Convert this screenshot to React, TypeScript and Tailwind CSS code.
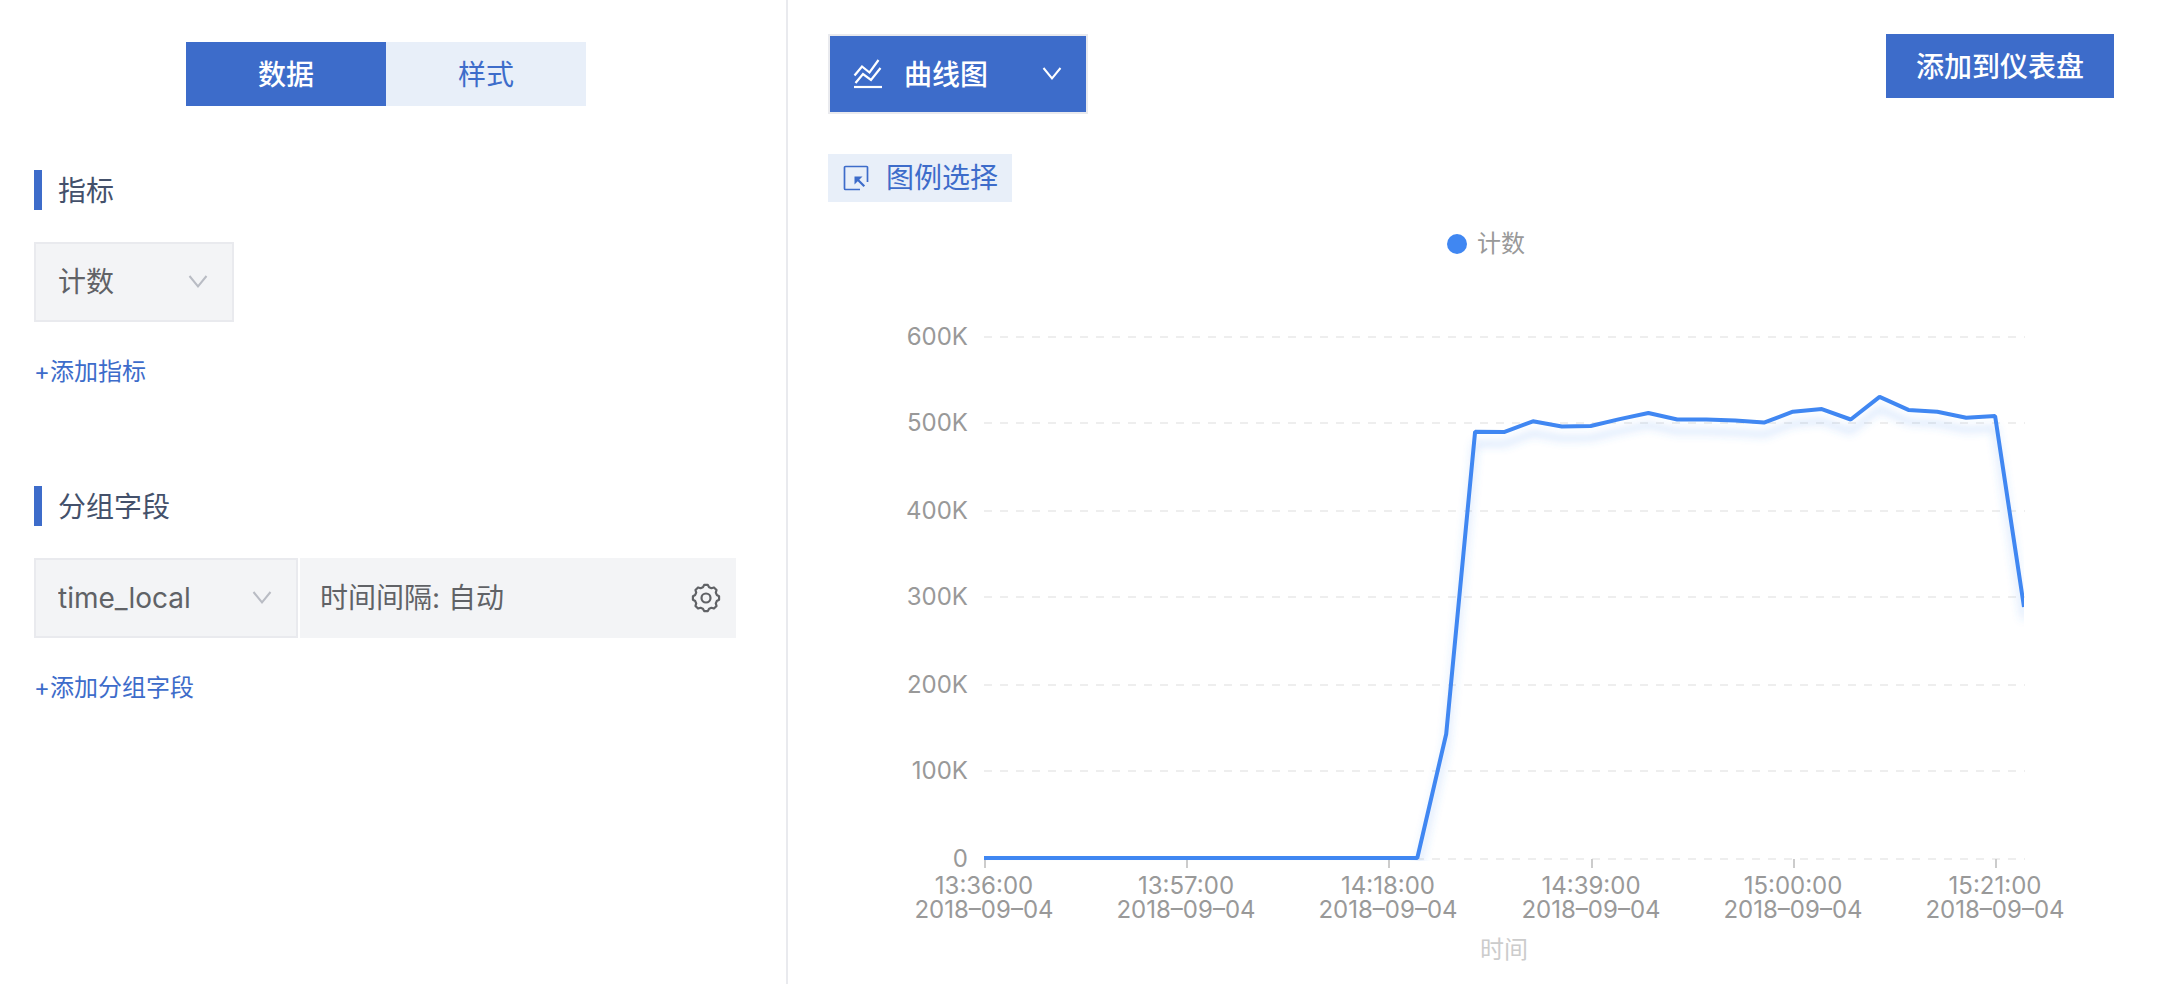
import React from "react";

const BODY_FONT = "font-['Inter','Noto_Sans_CJK_SC',sans-serif]";

function Chevron({ className }: { className: string }) {
  return (
    <svg
      viewBox="0 0 20 14"
      className={"pointer-events-none col-start-1 row-start-1 h-[14px] w-[20px] self-center justify-self-end " + className}
      fill="none"
      stroke="currentColor"
      strokeWidth="2"
      aria-hidden="true"
    >
      <path d="M1.5 1 L10 11.5 L18.5 1" />
    </svg>
  );
}

function gearPath() {
  const pts: string[] = [];
  const steps: [number, number][] = [
    [-16, 11.2],
    [-8, 13.2],
    [8, 13.2],
    [16, 11.2],
  ];
  for (let i = 0; i < 8; i++) {
    for (const [off, r] of steps) {
      const a = ((i * 45 + off - 90) * Math.PI) / 180;
      pts.push((15 + r * Math.cos(a)).toFixed(2) + " " + (15 + r * Math.sin(a)).toFixed(2));
    }
  }
  return "M" + pts.join("L") + "Z";
}

function GearIcon() {
  return (
    <svg viewBox="0 0 30 30" className="h-[30px] w-[30px]" fill="none" stroke="currentColor" strokeWidth="2.2" strokeLinejoin="round" aria-hidden="true">
      <path d={gearPath()} />
      <circle cx="15" cy="15" r="4.5" />
    </svg>
  );
}

function LinesIcon() {
  return (
    <svg
      viewBox="0 0 30 30"
      className="pointer-events-none col-start-1 row-start-1 ml-[25px] h-[30px] w-[30px] self-center text-white"
      fill="none"
      stroke="currentColor"
      strokeWidth="2.2"
      aria-hidden="true"
    >
      <path d="M1.5 16.5 L9 7.5 L16.5 13.5 L25.5 1" />
      <path d="M2.5 24 L10 15 L18 21 L27.5 9" />
      <path d="M1 28 H29" />
    </svg>
  );
}

function PickIcon() {
  return (
    <svg viewBox="0 0 26 26" className="h-[26px] w-[26px]" fill="none" stroke="currentColor" strokeWidth="1.7" aria-hidden="true">
      <path d="M24.5 17 V2.5 Q24.5 1.5 23.5 1.5 H2.5 Q1.5 1.5 1.5 2.5 V23.5 Q1.5 24.5 2.5 24.5 H17" />
      <path d="M11.5 11.5 H19.5 L11.5 19.5 Z" fill="currentColor" stroke="none" />
      <path d="M14 14 L21.3 21.3" strokeWidth="2.2" />
    </svg>
  );
}

function SectionTitle({ children }: { children: string }) {
  return (
    <h2 className="flex h-[40px] items-center border-l-8 border-[#3d6cca] pt-[2px] pl-[16px] text-[28px] leading-[38px] text-[#44516b]">
      {children}
    </h2>
  );
}

function FieldSelect({ label, value, width }: { label: string; value: string; width: string }) {
  return (
    <div className={"grid " + width}>
      <select
        aria-label={label}
        defaultValue={value}
        className="col-start-1 row-start-1 h-[80px] w-full appearance-none rounded-none border-2 border-[#e9eaee] bg-[#f3f4f6] pl-[22px] text-[28px] text-[#606266] outline-none"
      >
        <option>{value}</option>
      </select>
      <Chevron className="mr-[26px] text-[#b9bcc4]" />
    </div>
  );
}

const PLOT = { left: 156, right: 1196, top: 123, bottom: 645 };
const GRID = [
  { label: "600K", y: 123 },
  { label: "500K", y: 209 },
  { label: "400K", y: 297 },
  { label: "300K", y: 383 },
  { label: "200K", y: 471 },
  { label: "100K", y: 557 },
  { label: "0", y: 645 },
];
const TIMES = ["13:36:00", "13:57:00", "14:18:00", "14:39:00", "15:00:00", "15:21:00"];
const COUNTS = [
  0, 0, 0, 0, 0, 0, 0, 0, 0, 0, 0, 0, 0, 0, 0, 0, 142.5, 490, 489.5, 502, 496, 496.5, 504.5, 511.5, 504, 504, 503, 500.5,
  513, 516, 504, 530, 515, 513, 506, 508, 288.5,
];

function LineChart() {
  const step = (PLOT.right - PLOT.left) / (COUNTS.length - 1);
  const points = COUNTS.map(
    (v, i) => (PLOT.left + i * step).toFixed(1) + "," + (PLOT.bottom - 1 - v * 0.87).toFixed(1),
  ).join(" ");
  return (
    <svg viewBox="0 0 1286 760" className="mt-[12px] block w-full" role="img" aria-label="计数" fontSize="24">
      <defs>
        <clipPath id="plot">
          <rect x={PLOT.left} y="90" width={PLOT.right - PLOT.left} height={PLOT.bottom - 88} />
        </clipPath>
        <filter id="soft" filterUnits="userSpaceOnUse" x="100" y="90" width="1160" height="640">
          <feGaussianBlur stdDeviation="4" />
        </filter>
      </defs>
      <circle cx="629" cy="30" r="10" fill="#4087f2" />
      <text x="649" y="38" fill="#999999">计数</text>
      {GRID.map((g) => (
        <g key={g.label}>
          <line x1={PLOT.left} x2={PLOT.right + 1} y1={g.y} y2={g.y} stroke="#eeeeee" strokeWidth="2" strokeDasharray="8 8" />
          <text x="140" y={g.y + 8} textAnchor="end" fill="#999999">{g.label}</text>
        </g>
      ))}
      {TIMES.map((t, i) => {
        const x = Math.round(PLOT.left + i * 7 * step);
        return (
          <g key={t} textAnchor="middle" fill="#999999">
            <line x1={x + 1} x2={x + 1} y1="645" y2="654" stroke="#cccccc" strokeWidth="2" />
            <text y="680">
              <tspan x={x}>{t}</tspan>
              <tspan x={x} dy="24">2018–09–04</tspan>
            </text>
          </g>
        );
      })}
      <g clipPath="url(#plot)" fill="none" strokeWidth="4" strokeLinejoin="bevel">
        <g filter="url(#soft)">
          <polyline points={points} transform="translate(0 12)" stroke="#4087f2" strokeOpacity="0.28" />
        </g>
        <polyline points={points} stroke="#4087f2" />
      </g>
      <text x="676" y="744" textAnchor="middle" fill="#cccccc">时间</text>
    </svg>
  );
}

export default function App() {
  return (
    <div className={"flex min-h-screen bg-white " + BODY_FONT}>
      <aside className="w-[788px] shrink-0 border-r-2 border-[#e9eaee] pt-[42px] pr-[48px] pl-[34px]">
        <div className="flex justify-center text-[28px]" role="tablist">
          <button role="tab" aria-selected="true" className="h-[64px] w-[200px] bg-[#3d6cca] pt-[2px] font-medium text-white">
            数据
          </button>
          <button role="tab" aria-selected="false" className="h-[64px] w-[200px] bg-[#e8eff9] pt-[2px] text-[#3d6cca]">
            样式
          </button>
        </div>

        <section className="mt-[64px]">
          <SectionTitle>指标</SectionTitle>
          <div className="mt-[32px]">
            <FieldSelect label="指标" value="计数" width="w-[200px]" />
          </div>
          <button className="mt-[32px] block h-[36px] text-[24px] leading-[36px] text-[#3d6cca]">+添加指标</button>
        </section>

        <section className="mt-[96px]">
          <SectionTitle>分组字段</SectionTitle>
          <div className="mt-[32px] flex gap-[2px]">
            <FieldSelect label="分组字段" value="time_local" width="w-[264px]" />
            <div className="flex h-[80px] w-[436px] items-center justify-between bg-[#f3f4f6] pr-[15px] pl-[20px] text-[28px] text-[#606266]">
              <span>时间间隔: 自动</span>
              <button aria-label="设置">
                <GearIcon />
              </button>
            </div>
          </div>
          <button className="mt-[32px] block h-[36px] text-[24px] leading-[36px] text-[#3d6cca]">+添加分组字段</button>
        </section>
      </aside>

      <main className="min-w-0 flex-1 pt-[34px] pr-[44px] pl-[40px]">
        <div className="flex items-start justify-between">
          <div className="grid w-[260px]">
            <select
              aria-label="图表类型"
              defaultValue="曲线图"
              className="col-start-1 row-start-1 h-[80px] w-full appearance-none rounded-none border-2 border-[#e9eaee] bg-[#3d6cca] pt-[2px] pl-[74px] text-[28px] font-medium text-white outline-none"
            >
              <option>曲线图</option>
            </select>
            <LinesIcon />
            <Chevron className="mr-[26px] text-white" />
          </div>
          <button className="h-[64px] bg-[#3d6cca] px-[30px] pt-[2px] text-[28px] font-medium text-white">添加到仪表盘</button>
        </div>
        <button className="mt-[40px] flex h-[48px] items-center gap-[17px] bg-[#e8eff9] px-[14px] text-[28px] text-[#3d6cca] pr-[14px] pl-[15px]">
          <PickIcon />
          图例选择
        </button>
        <LineChart />
      </main>
    </div>
  );
}
